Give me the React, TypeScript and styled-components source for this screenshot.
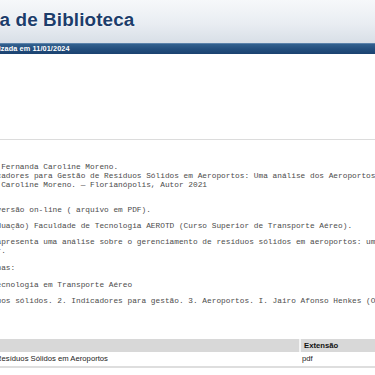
import React from 'react';
import styled, { createGlobalStyle } from 'styled-components';

const GlobalStyle = createGlobalStyle`
  html, body {
    margin: 0;
    padding: 0;
    background: #ffffff;
    overflow: hidden;
  }
`;

// the page is scrolled sideways, so everything starts left of the window
const Page = styled.div`
  width: 1000px;
  margin-left: -70px;
  font-family: "Liberation Sans", Arial, sans-serif;
`;

const Header = styled.header`
  height: 43px;
  box-sizing: border-box;
  padding: 8px 0 0 7px;
  background: linear-gradient(180deg, #f6f8fa 0%, #e9edf2 55%, #d8dfe7 100%);
`;

const Title = styled.h1`
  margin: 0;
  font-size: 18.9px;
  line-height: 24px;
  font-weight: bold;
  color: #1c3d6b;
  letter-spacing: 0.1px;
  text-shadow: 0 0 2px #ffffff, 0 0 1px #ffffff;
`;

const InfoBar = styled.div`
  height: 11px;
  box-sizing: border-box;
  padding-left: 50px;
  border-top: 1px solid #5b82ab;
  background: linear-gradient(180deg, #33618f 0%, #244f7e 50%, #1b4270 100%);
  color: #ffffff;
  font-size: 7.3px;
  font-weight: bold;
  line-height: 10px;
  letter-spacing: 0.1px;
`;

const Blank = styled.div`
  height: 85px;
  border-bottom: 1px solid #dcdcdc;
`;

const Card = styled.section`
  padding: 23px 0 0 15px;
  font-family: "Liberation Mono", "Courier New", monospace;
  font-size: 7.8px;
  line-height: 9px;
  color: #4c4c4c;
`;

const Para = styled.div<{ $gap: number }>`
  margin-top: ${(p) => p.$gap}px;
  white-space: pre;
`;

const Files = styled.table`
  margin-top: 33px;
  margin-left: -31px;
  width: 900px;
  border-collapse: collapse;
  font-family: "Liberation Sans", Arial, sans-serif;
  font-size: 7.7px;
  color: #111;
`;

const HeadCell = styled.th<{ $w?: number }>`
  height: 13px;
  line-height: 13px;
  padding: 0 3px;
  text-align: left;
  font-weight: bold;
  background: #d8d8d8;
  border-right: 2px solid #f4f4f4;
  width: ${(p) => (p.$w ? `${p.$w}px` : 'auto')};
`;

const Cell = styled.td<{ $pad: number }>`
  height: 14px;
  line-height: 14px;
  padding: 0 0 0 ${(p) => p.$pad}px;
  font-size: 7.7px;
  border-bottom: 2px solid #dedede;
  color: #222;
`;

const paragraphs: { gap: number; lines: string[] }[] = [
  {
    gap: 0,
    lines: [
      '    Moreno, Fernanda Caroline Moreno.',
      '       Indicadores para Gestão de Resíduos Sólidos em Aeroportos: Uma análise dos Aeroportos de Santa Catarina',
      ' / Fernanda Caroline Moreno. — Florianópolis, Autor 2021',
    ],
  },
  { gap: 16, lines: ['         1 versão on-line ( arquivo em PDF).'] },
  {
    gap: 6.5,
    lines: ['   TCC (Graduação) Faculdade de Tecnologia AEROTD (Curso Superior de Transporte Aéreo).'],
  },
  {
    gap: 7.5,
    lines: [
      'O trabalho apresenta uma análise sobre o gerenciamento de resíduos sólidos em aeroportos: um estudo',
      '           r.',
    ],
  },
  { gap: 8, lines: ['   Disciplinas:'] },
  { gap: 7.5, lines: ['          Tecnologia em Transporte Aéreo'] },
  {
    gap: 7.5,
    lines: [
      '   1. Resíduos sólidos. 2. Indicadores para gestão. 3. Aeroportos. I. Jairo Afonso Henkes (Orientador).',
    ],
  },
];

export default function App() {
  return (
    <>
      <GlobalStyle />
      <Page>
        <Header>
          <Title>Sistema de Biblioteca</Title>
        </Header>
        <InfoBar>Atualizada em 11/01/2024</InfoBar>
        <Blank />
        <Card>
          {paragraphs.map((p, i) => (
            <Para key={i} $gap={p.gap}>
              {p.lines.join('\n')}
            </Para>
          ))}
        </Card>
        <Files>
          <thead>
            <tr>
              <HeadCell $w={394}>Arquivo</HeadCell>
              <HeadCell>Extensão</HeadCell>
            </tr>
          </thead>
          <tbody>
            <tr>
              <Cell $pad={0}>Indicadores para Gestão de Resíduos Sólidos em Aeroportos</Cell>
              <Cell $pad={2}>pdf</Cell>
            </tr>
          </tbody>
        </Files>
      </Page>
    </>
  );
}
